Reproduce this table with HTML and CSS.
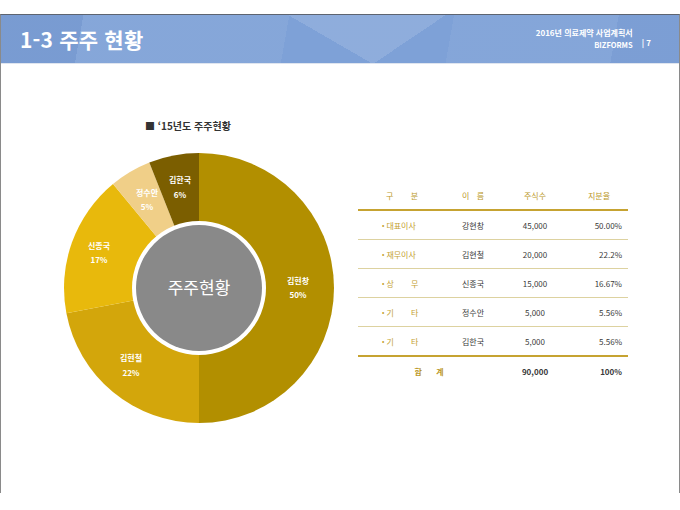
FILE: index.html
```html
<!DOCTYPE html>
<html lang="ko">
<head>
<meta charset="utf-8">
<title>1-3 주주 현황</title>
<link rel="stylesheet" href="styles.css">
</head>
<body>
<div class="slide">
  <header class="header">
    <h1 class="title">1-3 주주 현황</h1>
    <div class="meta">
      <div class="meta-text">
        <div class="meta-doc">2016년 의료제약 사업계획서</div>
        <div class="meta-brand">BIZFORMS</div>
      </div>
      <div class="meta-page">| 7</div>
    </div>
  </header>
  <main class="content">
    <section class="chart">
      <div class="chart-title">■ ‘15년도 주주현황</div>
      <svg class="donut" width="270" height="270" viewBox="0 0 270 270">
        <path d="M135,135 L135,0 A135,135 0 0 1 135,270 Z" fill="#b28f00"/>
        <path d="M135,135 L135,270 A135,135 0 0 1 2.4,160.3 Z" fill="#d3a60b"/>
        <path d="M135,135 L2.4,160.3 A135,135 0 0 1 49.0,31.0 Z" fill="#e8b90c"/>
        <path d="M135,135 L49.0,31.0 A135,135 0 0 1 85.3,9.5 Z" fill="#f0cf88"/>
        <path d="M135,135 L85.3,9.5 A135,135 0 0 1 135,0 Z" fill="#7b5e00"/>
        <circle cx="135" cy="135" r="67" fill="#ffffff"/>
        <circle cx="135" cy="135" r="63" fill="#898989"/>
        <text class="center-label" x="135" y="136">주주현황</text>
        <text class="slice-label" x="234" y="129">김현창</text>
        <text class="slice-label" x="234" y="143">50%</text>
        <text class="slice-label" x="67" y="206">김현철</text>
        <text class="slice-label" x="67" y="221">22%</text>
        <text class="slice-label" x="35" y="94">신종국</text>
        <text class="slice-label" x="35" y="108">17%</text>
        <text class="slice-label" x="83" y="41">정수안</text>
        <text class="slice-label" x="83" y="55">5%</text>
        <text class="slice-label" x="116" y="28">김한국</text>
        <text class="slice-label" x="116" y="43">6%</text>
      </svg>
    </section>
    <section class="table">
      <div class="row head">
        <div class="c1 center"><span class="just w32">구 분</span></div>
        <div class="c2 center"><span class="just w22">이 름</span></div>
        <div class="c3 center">주식수</div>
        <div class="c4 center">지분율</div>
      </div>
      <div class="row">
        <div class="c1 label"><span class="dot">•</span><span class="just w32">대표이사</span></div>
        <div class="c2 center name">강현창</div>
        <div class="c3 center num">45,000</div>
        <div class="c4 right num">50.00%</div>
      </div>
      <div class="row">
        <div class="c1 label"><span class="dot">•</span><span class="just w32">재무이사</span></div>
        <div class="c2 center name">김현철</div>
        <div class="c3 center num">20,000</div>
        <div class="c4 right num">22.2%</div>
      </div>
      <div class="row">
        <div class="c1 label"><span class="dot">•</span><span class="just w32">상 무</span></div>
        <div class="c2 center name">신종국</div>
        <div class="c3 center num">15,000</div>
        <div class="c4 right num">16.67%</div>
      </div>
      <div class="row">
        <div class="c1 label"><span class="dot">•</span><span class="just w32">기 타</span></div>
        <div class="c2 center name">정수안</div>
        <div class="c3 center num">5,000</div>
        <div class="c4 right num">5.56%</div>
      </div>
      <div class="row last">
        <div class="c1 label"><span class="dot">•</span><span class="just w32">기 타</span></div>
        <div class="c2 center name">김한국</div>
        <div class="c3 center num">5,000</div>
        <div class="c4 right num">5.56%</div>
      </div>
      <div class="row total">
        <div class="c12 center"><span class="just w29">합 계</span></div>
        <div class="c3 center num">90,000</div>
        <div class="c4 right num">100%</div>
      </div>
    </section>
  </main>
</div>
</body>
</html>
```
FILE: styles.css
```css
* { box-sizing: border-box; }
html, body { margin: 0; padding: 0; background: #ffffff; }
body {
  font-family: "Noto Sans CJK KR", "Noto Sans", sans-serif;
  width: 680px;
  height: 510px;
  overflow: hidden;
}
.slide {
  margin-top: 14px;
  width: 680px;
  height: 479px;
  border-top: 1px solid #5d6470;
  border-left: 1px solid #8a8a8a;
  border-right: 1px solid #8a8a8a;
}
.header {
  height: 49px;
  border-bottom: 1px solid #dfe5ef;
  display: flex;
  align-items: center;
  justify-content: space-between;
  padding: 0 28px 0 19px;
  background:
    conic-gradient(from 0deg at 372px 49px, rgba(255,255,255,0.13) 0 56deg, transparent 56deg 300deg, rgba(255,255,255,0.13) 300deg),
    linear-gradient(100deg, rgba(0,20,80,0.04) 0 12%, rgba(255,255,255,0.06) 12% 42%, transparent 42% 66%, rgba(255,255,255,0.05) 66% 90%, rgba(0,20,80,0.02) 90%),
    #7ea1d7;
}
.title {
  margin: 0;
  font-size: 21px;
  font-weight: 700;
  color: #ffffff;
  line-height: 1;
  letter-spacing: 0.2px;
}
.meta {
  display: flex;
  align-items: flex-end;
  gap: 9px;
  color: #ffffff;
}
.meta-text {
  text-align: right;
  line-height: 12px;
  font-weight: 700;
}
.meta-doc { font-size: 8px; }
.meta-brand { font-size: 7.5px; }
.meta-page {
  font-size: 8px;
  font-weight: 700;
  line-height: 12px;
  padding-bottom: 2px;
}
.content {
  display: flex;
  align-items: flex-start;
  padding-left: 63px;
}
.chart {
  width: 270px;
  padding-top: 55px;
}
.chart-title {
  padding-left: 81px;
  font-size: 10px;
  font-weight: 700;
  color: #333333;
  line-height: 14px;
}
.donut {
  display: block;
  margin-top: 20px;
}
.slice-label {
  font-size: 8px;
  font-weight: 700;
  fill: #ffffff;
  text-anchor: middle;
  dominant-baseline: middle;
}
.center-label {
  font-size: 17px;
  fill: #ffffff;
  text-anchor: middle;
  dominant-baseline: middle;
}
.table {
  width: 270px;
  margin-left: 24px;
  margin-top: 117px;
  font-size: 8px;
}
.row {
  display: grid;
  grid-template-columns: 88px 54px 70px 58px;
  align-items: center;
  height: 29px;
  border-bottom: 1px solid #ddd2a0;
}
.row.head {
  height: 30px;
  border-bottom: 2px solid #c6a331;
  color: #bb982a;
}
.row.last {
  height: 30px;
  border-bottom: 2px solid #c6a331;
}
.row.total {
  height: 28px;
  border-bottom: none;
  font-weight: 700;
}
.c12 { grid-column: 1 / span 2; color: #bb982a; }
.center { text-align: center; }
.right { text-align: right; padding-right: 6px; }
.label {
  padding-left: 24px;
  color: #c4a131;
  display: flex;
  align-items: center;
  gap: 2px;
}
.dot { font-size: 7px; }
.just {
  display: inline-block;
  text-align: justify;
  text-align-last: justify;
}
.w32 { width: 32px; }
.w22 { width: 22px; }
.w29 { width: 29px; }
.name { color: #3a3a3a; }
.num { color: #3a3a3a; }
```
